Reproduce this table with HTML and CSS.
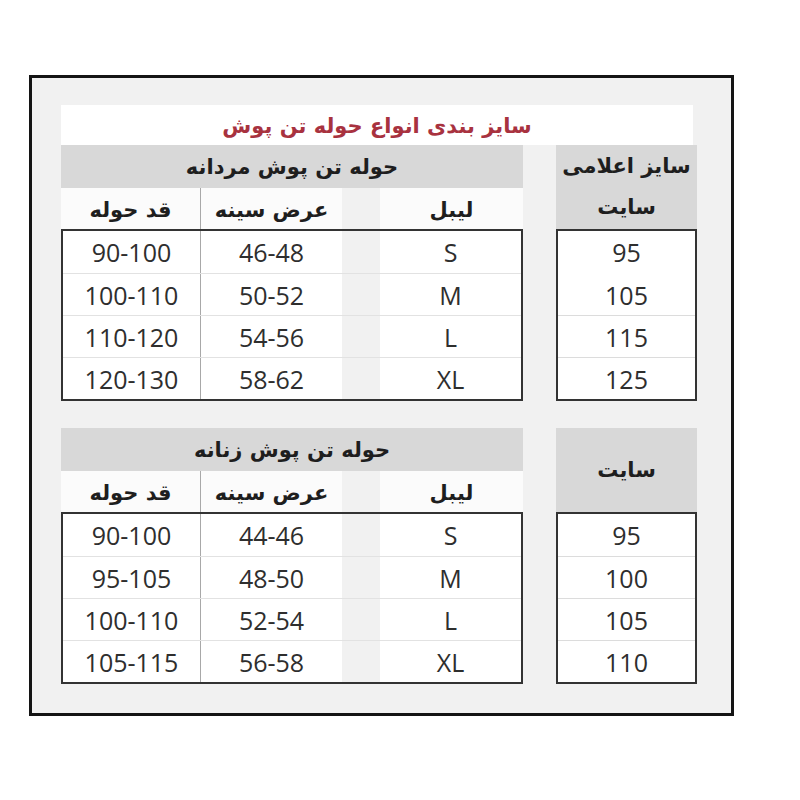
FILE: index.html
```html
<!DOCTYPE html>
<html lang="fa">
<head>
<meta charset="utf-8">
<title>سایز بندی انواع حوله تن پوش</title>
<link rel="stylesheet" href="styles.css">
</head>
<body>
<div class="frame">
  <div class="title" dir="rtl">سایز بندی انواع حوله تن پوش</div>

  <div class="section">
    <div class="left">
      <div class="group-head" dir="rtl">حوله تن پوش مردانه</div>
      <div class="col-heads">
        <div class="ch ch-1" dir="rtl">قد حوله</div>
        <div class="ch ch-2" dir="rtl">عرض سینه</div>
        <div class="ch ch-gap"></div>
        <div class="ch ch-4" dir="rtl">لیبل</div>
      </div>
      <div class="table">
        <div class="row"><div class="c c1">90-100</div><div class="c c2">46-48</div><div class="c gap"></div><div class="c c4">S</div></div>
        <div class="row"><div class="c c1">100-110</div><div class="c c2">50-52</div><div class="c gap"></div><div class="c c4">M</div></div>
        <div class="row"><div class="c c1">110-120</div><div class="c c2">54-56</div><div class="c gap"></div><div class="c c4">L</div></div>
        <div class="row"><div class="c c1">120-130</div><div class="c c2">58-62</div><div class="c gap"></div><div class="c c4">XL</div></div>
      </div>
    </div>
    <div class="right">
      <div class="site-head two" dir="rtl"><span>سایز اعلامی</span><span>سایت</span></div>
      <div class="site-table">
        <div class="s no-line">95</div>
        <div class="s">105</div>
        <div class="s">115</div>
        <div class="s">125</div>
      </div>
    </div>
  </div>

  <div class="section second">
    <div class="left">
      <div class="group-head" dir="rtl">حوله تن پوش زنانه</div>
      <div class="col-heads">
        <div class="ch ch-1" dir="rtl">قد حوله</div>
        <div class="ch ch-2" dir="rtl">عرض سینه</div>
        <div class="ch ch-gap"></div>
        <div class="ch ch-4" dir="rtl">لیبل</div>
      </div>
      <div class="table">
        <div class="row"><div class="c c1">90-100</div><div class="c c2">44-46</div><div class="c gap"></div><div class="c c4">S</div></div>
        <div class="row"><div class="c c1">95-105</div><div class="c c2">48-50</div><div class="c gap"></div><div class="c c4">M</div></div>
        <div class="row"><div class="c c1">100-110</div><div class="c c2">52-54</div><div class="c gap"></div><div class="c c4">L</div></div>
        <div class="row"><div class="c c1">105-115</div><div class="c c2">56-58</div><div class="c gap"></div><div class="c c4">XL</div></div>
      </div>
    </div>
    <div class="right">
      <div class="site-head" dir="rtl"><span>سایت</span></div>
      <div class="site-table">
        <div class="s">95</div>
        <div class="s">100</div>
        <div class="s">105</div>
        <div class="s">110</div>
      </div>
    </div>
  </div>
</div>
</body>
</html>
```

FILE: styles.css
```css
* { box-sizing: border-box; }

html, body {
  margin: 0;
  padding: 0;
  background: #ffffff;
}

body {
  width: 800px;
  height: 800px;
  padding: 75px 0 0 29px;
  font-family: "Open Sans", "DejaVu Sans", sans-serif;
  color: #2b2b2b;
}

.frame {
  width: 705px;
  height: 641px;
  border: 3px solid #141414;
  background: #f1f1f1;
  padding: 27px 0 0 29px;
}

.title {
  width: 632px;
  height: 40px;
  background: #ffffff;
  display: flex;
  align-items: center;
  justify-content: center;
  font-family: "DejaVu Sans", sans-serif;
  font-weight: bold;
  font-size: 21px;
  color: #a8323f;
  padding-top: 2px;
}

.section {
  display: grid;
  grid-template-columns: 462px 141px;
  column-gap: 33px;
}

.section.second {
  margin-top: 27px;
}

.group-head {
  height: 43px;
  background: #d8d8d8;
  display: flex;
  align-items: center;
  justify-content: center;
  font-family: "DejaVu Sans", sans-serif;
  font-weight: bold;
  font-size: 21px;
  color: #1e1e1e;
}

.col-heads {
  height: 41px;
  display: grid;
  grid-template-columns: 140px 141px 38px 143px;
}

.ch {
  display: flex;
  align-items: center;
  justify-content: center;
  font-family: "DejaVu Sans", sans-serif;
  font-weight: bold;
  font-size: 21px;
  color: #1e1e1e;
  background: #fbfbfb;
  padding-top: 2px;
}

.ch-1 { border-right: 1px solid #a8a8a8; }
.ch-gap { background: #f1f1f1; }

.table {
  height: 172px;
  border: 2px solid #333333;
  display: grid;
  grid-template-rows: repeat(4, 1fr);
  background: #f1f1f1;
}

.row {
  display: grid;
  grid-template-columns: 138px 141px 38px 141px;
  border-top: 1px solid #e2e2e2;
}

.row:first-child { border-top: none; }

.c {
  display: flex;
  align-items: center;
  justify-content: center;
  font-size: 25px;
  background: #ffffff;
  color: #2e2e2e;
}

.c1 { border-right: 1px solid #a8a8a8; }
.c.gap { background: #f1f1f1; }

.site-head {
  height: 84px;
  background: #d8d8d8;
  display: flex;
  flex-direction: column;
  align-items: center;
  justify-content: center;
  font-family: "DejaVu Sans", sans-serif;
  font-weight: bold;
  font-size: 21px;
  color: #1e1e1e;
  line-height: 41px;
}

.site-table {
  height: 172px;
  border: 2px solid #333333;
  background: #ffffff;
  display: grid;
  grid-template-rows: repeat(4, 1fr);
}

.s {
  display: flex;
  align-items: center;
  justify-content: center;
  font-size: 25px;
  color: #2e2e2e;
  border-top: 1px solid #dcdcdc;
}

.s:first-child { border-top: none; }
.s.no-line + .s { border-top-color: #ffffff; }
```
